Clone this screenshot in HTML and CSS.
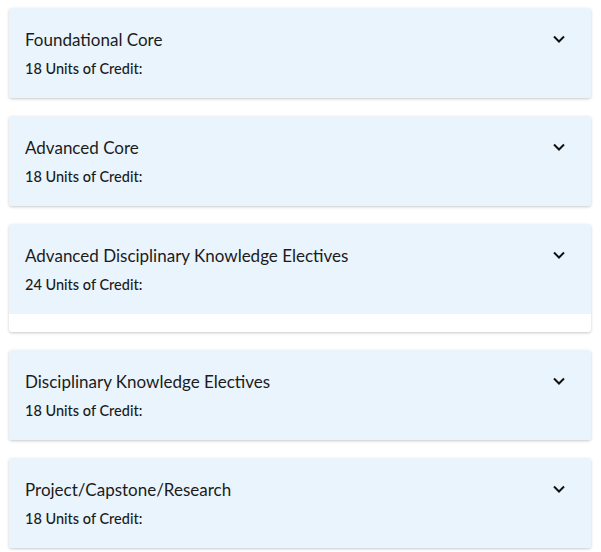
FILE: index.html
```html
<!DOCTYPE html>
<html lang="en">
<head>
    <meta charset="UTF-8">
    <meta name="viewport" content="width=device-width, initial-scale=1.0">
    <title>Program Structure</title>
    <link rel="stylesheet" href="styles.css">
</head>
<body>
    <div class="accordion">
        <div class="panel">
            <div class="panel-head">
                <div class="panel-text">
                    <h3 class="panel-title">Foundational Core</h3>
                    <p class="panel-uoc">18 Units of Credit:</p>
                </div>
                <svg class="chevron" width="12" height="8" viewBox="0 0 12 8"><path d="M1 1.5l5 5 5-5" fill="none" stroke="#111" stroke-width="2"/></svg>
            </div>
        </div>
        <div class="panel">
            <div class="panel-head">
                <div class="panel-text">
                    <h3 class="panel-title">Advanced Core</h3>
                    <p class="panel-uoc">18 Units of Credit:</p>
                </div>
                <svg class="chevron" width="12" height="8" viewBox="0 0 12 8"><path d="M1 1.5l5 5 5-5" fill="none" stroke="#111" stroke-width="2"/></svg>
            </div>
        </div>
        <div class="panel">
            <div class="panel-head">
                <div class="panel-text">
                    <h3 class="panel-title">Advanced Disciplinary Knowledge Electives</h3>
                    <p class="panel-uoc">24 Units of Credit:</p>
                </div>
                <svg class="chevron" width="12" height="8" viewBox="0 0 12 8"><path d="M1 1.5l5 5 5-5" fill="none" stroke="#111" stroke-width="2"/></svg>
            </div>
            <div class="panel-body"></div>
        </div>
        <div class="panel">
            <div class="panel-head">
                <div class="panel-text">
                    <h3 class="panel-title">Disciplinary Knowledge Electives</h3>
                    <p class="panel-uoc">18 Units of Credit:</p>
                </div>
                <svg class="chevron" width="12" height="8" viewBox="0 0 12 8"><path d="M1 1.5l5 5 5-5" fill="none" stroke="#111" stroke-width="2"/></svg>
            </div>
        </div>
        <div class="panel">
            <div class="panel-head">
                <div class="panel-text">
                    <h3 class="panel-title">Project/Capstone/Research</h3>
                    <p class="panel-uoc">18 Units of Credit:</p>
                </div>
                <svg class="chevron" width="12" height="8" viewBox="0 0 12 8"><path d="M1 1.5l5 5 5-5" fill="none" stroke="#111" stroke-width="2"/></svg>
            </div>
        </div>
    </div>
</body>
</html>
```

FILE: styles.css
```css
body {
    margin: 0;
    padding: 8px 10px 8px 9px;
    font-family: Lato, "Open Sans", sans-serif;
    background-color: #fff;
    color: #1b1b1b;
}
.accordion {
    display: flex;
    flex-direction: column;
    gap: 18px;
}
.panel {
    background-color: #fff;
    border-radius: 3px;
    box-shadow: 0 1px 3px rgba(0, 0, 0, 0.22);
    overflow: hidden;
}
.panel-head {
    display: flex;
    justify-content: space-between;
    align-items: flex-start;
    background-color: #eaf4fc;
    padding: 20px 26px 20px 16px;
    height: 50px;
}
.panel-title {
    margin: 0;
    font-size: 17px;
    font-weight: 400;
    line-height: 24px;
}
.panel-uoc {
    margin: 7px 0 0;
    font-size: 14.5px;
    font-weight: 500;
    line-height: 19px;
}
.chevron {
    margin-top: 7px;
}
.panel-body {
    height: 18px;
}
```
